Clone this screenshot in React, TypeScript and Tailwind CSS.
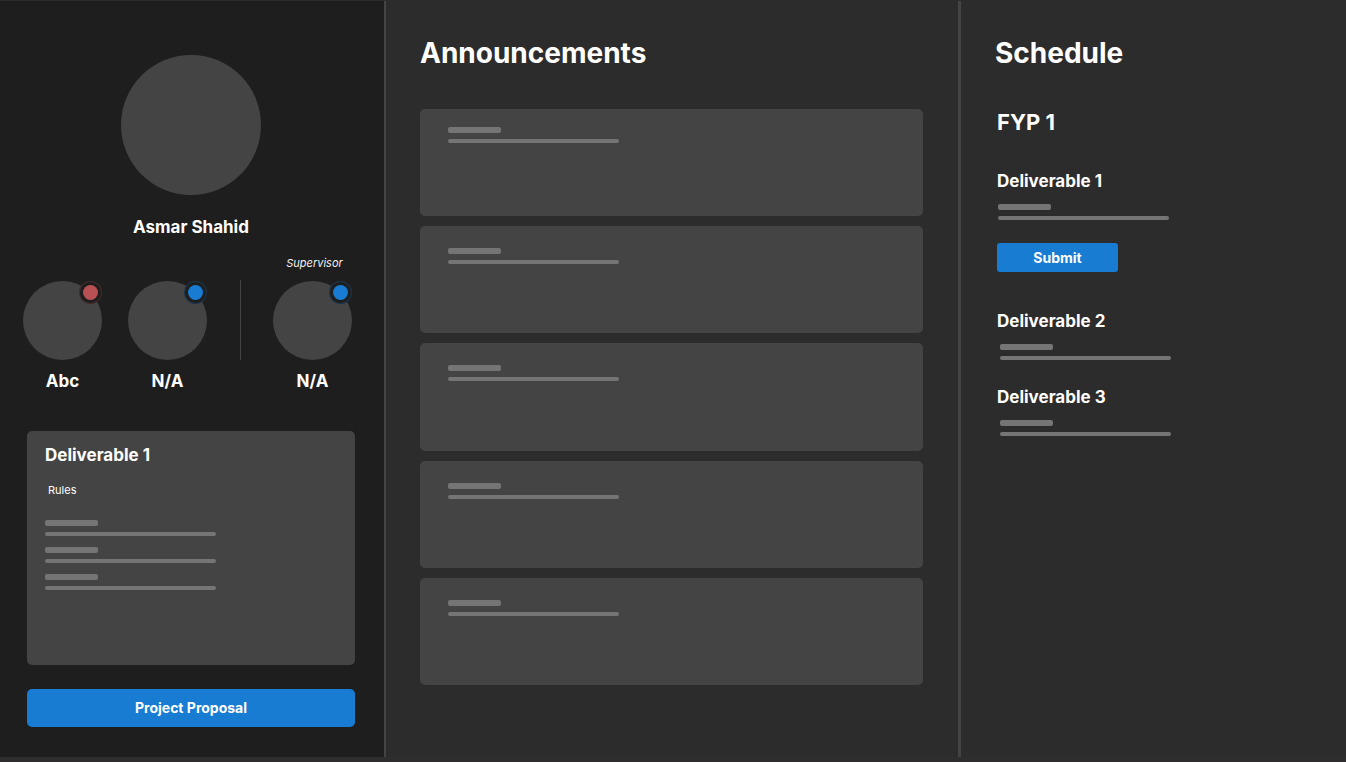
import clsx from "clsx";

type Status = "busy" | "open";

function Placeholder({ className }: { className?: string }) {
  return (
    <div className={clsx("flex flex-col gap-[6px]", className)} aria-hidden="true">
      <div className="h-[6px] w-[53px] rounded-xs bg-[#757575]" />
      <div className="h-1 w-[171px] max-w-full rounded-xs bg-[#757575]" />
    </div>
  );
}

function Member({ name, status, role }: { name: string; status: Status; role?: string }) {
  return (
    <li className="flex w-[79px] flex-col items-center">
      <span className="h-[26px] pl-1 text-[11px] leading-4 text-[#f2f2f2] italic">{role}</span>
      <div className="relative size-[79px] rounded-full bg-[#444444]">
        <span
          className={clsx(
            "absolute top-0 right-0 grid size-[23px] place-items-center rounded-full border bg-[#1e1e1e]",
            status === "busy" ? "border-[#b95054]/25" : "border-[#177cd2]/25",
          )}
        >
          <span
            className={clsx(
              "size-[15px] rounded-full",
              status === "busy" ? "bg-[#b95054]" : "bg-[#177cd2]",
            )}
          />
        </span>
      </div>
      <span className="mt-[9px] text-[17px] leading-6 font-bold">{name}</span>
    </li>
  );
}

function Sidebar() {
  return (
    <aside className="flex w-[386px] shrink-0 flex-col border-r-2 border-[#444444] bg-[#1e1e1e] pr-[29px] pl-[27px]">
      <div className="flex flex-col items-center pt-[54px]">
        <div className="size-[140px] rounded-full bg-[#444444]" />
        <h1 className="mt-5 text-[17px] leading-6 font-bold">Asmar Shahid</h1>
      </div>

      <ul className="-mx-1 mt-4 flex">
        <Member name="Abc" status="busy" />
        <li className="w-[26px]" aria-hidden="true" />
        <Member name="N/A" status="open" />
        <li className="mr-8 ml-[33px] mt-[25px] h-20 w-px bg-[#444444]" aria-hidden="true" />
        <Member name="N/A" status="open" role="Supervisor" />
      </ul>

      <section className="mt-[38px] min-h-[234px] rounded-[5px] bg-[#444444] px-[18px] pt-3">
        <h2 className="text-[17px] leading-6 font-bold">Deliverable 1</h2>
        <p className="mt-[15px] px-[3px] text-[11px] leading-4">Rules</p>
        <div className="mt-[22px] flex flex-col gap-[11px]">
          <Placeholder />
          <Placeholder />
          <Placeholder />
        </div>
      </section>

      <button
        type="button"
        className="mt-6 h-[38px] rounded-[5px] bg-[#177cd2] text-sm font-bold"
      >
        Project Proposal
      </button>
    </aside>
  );
}

function Announcements() {
  return (
    <main className="min-w-0 flex-1 border-r-3 border-[#444444] pr-[35px] pl-[34px]">
      <h2 className="pt-[34px] text-[28px] leading-9 font-bold">Announcements</h2>
      <div className="mt-[38px] grid min-h-[576px] auto-rows-fr gap-[10px]">
        {[0, 1, 2, 3, 4].map((index) => (
          <article
            key={index}
            className={clsx("rounded-[5px] bg-[#444444] px-7", index === 0 ? "pt-[18px]" : "pt-[22px]")}
          >
            <Placeholder />
          </article>
        ))}
      </div>
    </main>
  );
}

function Schedule() {
  return (
    <aside className="w-[385px] shrink-0 px-[34px]">
      <h2 className="pt-[34px] text-[28px] leading-9 font-bold">Schedule</h2>
      <div className="pl-[2px]">
        <h3 className="mt-[35px] text-[22px] leading-8 font-bold">FYP 1</h3>
        <h4 className="mt-[31px] text-[17px] leading-6 font-bold">Deliverable 1</h4>
        <Placeholder className="mt-[11px] pl-px" />
        <button
          type="button"
          className="mt-[23px] block h-[29px] w-[121px] rounded-[3px] bg-[#177cd2] text-sm font-bold"
        >
          Submit
        </button>
        <h4 className="mt-[37px] text-[17px] leading-6 font-bold">Deliverable 2</h4>
        <Placeholder className="mt-[11px] pl-[3px]" />
        <h4 className="mt-[25px] text-[17px] leading-6 font-bold">Deliverable 3</h4>
        <Placeholder className="mt-[11px] pl-[3px]" />
      </div>
    </aside>
  );
}

export default function App() {
  return (
    <div className="flex min-h-screen flex-col border-t border-b-[5px] border-t-[#2c2c2c] border-b-[#302d2e] bg-[#2c2c2c] font-['Inter',sans-serif] text-white antialiased">
      <div className="flex flex-1">
        <Sidebar />
        <Announcements />
        <Schedule />
      </div>
    </div>
  );
}
